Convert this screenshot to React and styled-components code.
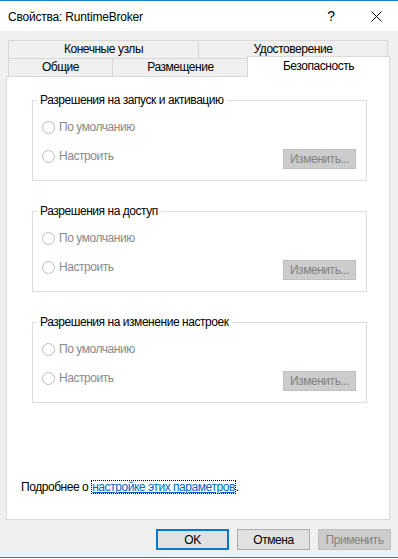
import React from "react";
import styled, { createGlobalStyle } from "styled-components";

const GlobalStyle = createGlobalStyle`
  html, body {
    margin: 0;
    padding: 0;
    background: #ffffff;
  }
  body {
    font-family: "Liberation Sans", Arial, sans-serif;
    font-size: 12px;
    letter-spacing: -0.45px;
    color: #000000;
  }
`;

const Window = styled.div`
  width: 398px;
  height: 559px;
  display: flex;
  flex-direction: column;
  background: #ffffff;
`;

const TitleBar = styled.div`
  height: 30px;
  border-top: 1px solid #1883d7;
  display: flex;
  align-items: center;
  padding-left: 8px;
  background: #ffffff;
`;

const Title = styled.div`
  flex: 1;
  font-size: 12px;
  letter-spacing: -0.2px;
  margin-top: 1px;
`;

const TitleButton = styled.div`
  width: ${(p) => p.$w}px;
  height: 30px;
  display: flex;
  align-items: center;
  justify-content: center;
  font-size: 14px;
`;

const Body = styled.div`
  background: #f0f0f0;
  padding: 9px 8px 7px 6px;
  border-bottom: 1px solid #1883d7;
  display: flex;
  flex-direction: column;
`;

const TabStrip = styled.div`
  display: flex;
  flex-direction: column;
  padding-left: 2px;
`;

const TabRow = styled.div`
  display: flex;
  align-items: flex-end;
  height: 18px;
`;

const Tab = styled.div`
  width: ${(p) => p.$w}px;
  height: ${(p) => (p.$active ? 21 : 18)}px;
  margin-left: ${(p) => (p.$first ? 0 : p.$active ? -2 : -1)}px;
  margin-bottom: ${(p) => (p.$active ? -1 : 0)}px;
  box-sizing: border-box;
  border: 1px solid #d9d9d9;
  border-bottom: none;
  background: ${(p) => (p.$active ? "#ffffff" : "#f0f0f0")};
  display: flex;
  justify-content: center;
  padding-top: ${(p) => (p.$active ? 2 : 1)}px;
  line-height: 15px;
  position: ${(p) => (p.$active ? "relative" : "static")};
  z-index: ${(p) => (p.$active ? 1 : "auto")};
`;

const Panel = styled.div`
  width: 384px;
  height: 444px;
  box-sizing: border-box;
  border: 1px solid #d9d9d9;
  background: #ffffff;
  display: flex;
  flex-direction: column;
  padding-top: 23px;
`;

const Group = styled.div`
  width: 335px;
  box-sizing: border-box;
  margin-left: 25px;
  margin-top: ${(p) => (p.$first ? 0 : 30)}px;
  border: 1px solid #dcdcdc;
  padding: 0 10px 11px 9px;
  display: flex;
  flex-direction: column;
`;

const Legend = styled.div`
  align-self: flex-start;
  margin: -9px 0 0 -5px;
  padding: 0 3px;
  line-height: 16px;
  background: #ffffff;
`;

const RadioRow = styled.div`
  display: flex;
  justify-content: space-between;
  align-items: flex-start;
  margin-top: ${(p) => p.$mt}px;
`;

const Radio = styled.label`
  display: flex;
  align-items: center;
  gap: 4px;
  height: 16px;
  color: #8a8a8a;
`;

const Circle = styled.span`
  width: 13px;
  height: 13px;
  box-sizing: border-box;
  border-radius: 50%;
  border: 1px solid #bcbcbc;
  background: #ffffff;
`;

const Button = styled.div`
  width: 73px;
  height: ${(p) => p.$h || 21}px;
  box-sizing: border-box;
  display: flex;
  align-items: center;
  justify-content: center;
  margin-top: ${(p) => p.$mt || 0}px;
  background: ${(p) => (p.$disabled ? "#cccccc" : "#e1e1e1")};
  border: ${(p) =>
    p.$default
      ? "2px solid #0078d7"
      : p.$disabled
      ? "1px solid #bfbfbf"
      : "1px solid #adadad"};
  color: ${(p) => (p.$disabled ? "#838383" : "#000000")};
`;

const Footer = styled.div`
  margin: auto 0 24px 14px;
  line-height: 16px;
`;

const Link = styled.span`
  color: #0066cc;
  text-decoration: underline;
  outline: 1px dotted #000000;
  outline-offset: -1px;
  padding: 0 1px;
`;

const ButtonBar = styled.div`
  display: flex;
  justify-content: flex-end;
  gap: 8px;
  margin-top: 9px;
  margin-right: -1px;
`;

const CloseIcon = () => (
  <svg width="11" height="11" viewBox="0 0 11 11">
    <path d="M0.5 0.5 L10.5 10.5 M10.5 0.5 L0.5 10.5" stroke="#000" strokeWidth="1" fill="none" />
  </svg>
);

const groups = [
  "Разрешения на запуск и активацию",
  "Разрешения на доступ",
  "Разрешения на изменение настроек",
];

const PermissionGroup = ({ title, first }) => (
  <Group $first={first}>
    <Legend>{title}</Legend>
    <RadioRow $mt={11}>
      <Radio>
        <Circle />
        По умолчанию
      </Radio>
    </RadioRow>
    <RadioRow $mt={13}>
      <Radio>
        <Circle />
        Настроить
      </Radio>
      <Button $disabled $h={20} $mt={1}>
        Изменить...
      </Button>
    </RadioRow>
  </Group>
);

export default function App() {
  return (
    <Window>
      <GlobalStyle />
      <TitleBar>
        <Title>Свойства: RuntimeBroker</Title>
        <TitleButton $w={46}>?</TitleButton>
        <TitleButton $w={44}>
          <CloseIcon />
        </TitleButton>
      </TitleBar>
      <Body>
        <TabStrip>
          <TabRow>
            <Tab $first $w={191}>Конечные узлы</Tab>
            <Tab $w={190}>Удостоверение</Tab>
          </TabRow>
          <TabRow>
            <Tab $first $w={105}>Общие</Tab>
            <Tab $w={137}>Размещение</Tab>
            <Tab $active $w={143}>Безопасность</Tab>
          </TabRow>
        </TabStrip>
        <Panel>
          {groups.map((g, i) => (
            <PermissionGroup key={g} title={g} first={i === 0} />
          ))}
          <Footer>
            Подробнее о <Link>настройке этих параметров</Link>.
          </Footer>
        </Panel>
        <ButtonBar>
          <Button $default>OK</Button>
          <Button>Отмена</Button>
          <Button $disabled>Применить</Button>
        </ButtonBar>
      </Body>
    </Window>
  );
}
